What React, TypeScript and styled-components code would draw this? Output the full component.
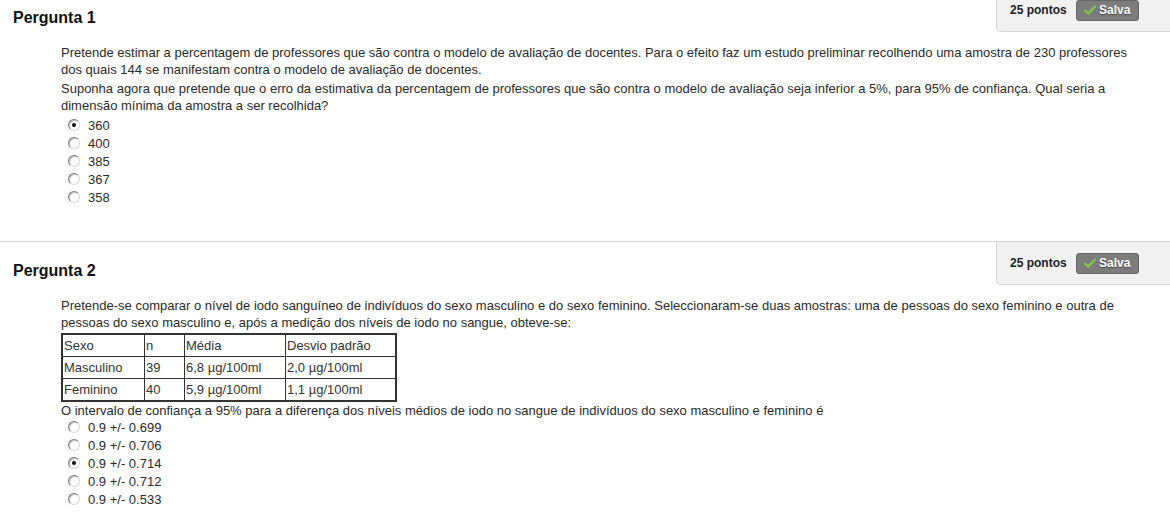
import React from "react";
import styled, { createGlobalStyle } from "styled-components";

const Global = createGlobalStyle`
  html, body { margin: 0; padding: 0; background: #fff; }
  body { font-family: Arial, "Liberation Sans", sans-serif; color: #222; }
`;

const Page = styled.div`
  margin-top: -12px;
  width: 1170px;
  overflow: hidden;
`;

const Section = styled.section<{ $height?: number }>`
  border-top: 1px solid #d2d2d2;
  ${(p) => (p.$height ? `height: ${p.$height}px;` : "")}
  box-sizing: border-box;
`;

const Header = styled.div`
  display: flex;
  justify-content: space-between;
  align-items: flex-start;
`;

const Title = styled.h2`
  margin: 20px 0 0 13px;
  font-size: 16px;
  line-height: 18px;
  font-weight: bold;
  color: #111;
`;

const ScoreBox = styled.div`
  width: 174px;
  height: 43px;
  box-sizing: border-box;
  background: #f1f1f1;
  border-left: 1px solid #d6d6d6;
  border-bottom: 1px solid #d6d6d6;
  border-bottom-left-radius: 5px;
  display: flex;
  align-items: center;
  padding-left: 13px;
  gap: 9px;
`;

const Points = styled.span`
  font-size: 12px;
  font-weight: bold;
  color: #222;
`;

const SavedButton = styled.span`
  display: inline-flex;
  align-items: center;
  justify-content: center;
  gap: 3px;
  width: 63px;
  height: 21px;
  box-sizing: border-box;
  background: #7c7c7c;
  border: 1px solid #666;
  border-radius: 3px;
  color: #fff;
  font-size: 12px;
  font-weight: bold;
  text-shadow: 0 1px 1px #444;
`;

const Body = styled.div`
  padding: 12px 30px 0 61px;
  font-size: 13px;
  line-height: 17px;
  color: #2a2a2a;
`;

const Para = styled.p<{ $mb?: number }>`
  margin: 0 0 ${(p) => p.$mb ?? 2}px 0;
`;

const Options = styled.ul<{ $mt?: number }>`
  list-style: none;
  margin: ${(p) => p.$mt ?? 0}px 0 0 0;
  padding: 0 0 0 7px;
`;

const Option = styled.li`
  display: flex;
  align-items: center;
  height: 18px;
  gap: 8px;
`;

const Radio = styled.span<{ $checked?: boolean }>`
  position: relative;
  width: 12px;
  height: 12px;
  box-sizing: border-box;
  border-radius: 50%;
  border: 1px solid #7a7a7a;
  border-right-color: #d8d8d8;
  border-bottom-color: #d8d8d8;
  background: #fff;
  box-shadow: inset 1px 1px 0 #bdbdbd;
  &::after {
    content: "";
    display: ${(p) => (p.$checked ? "block" : "none")};
    position: absolute;
    left: 3px;
    top: 3px;
    width: 4px;
    height: 4px;
    border-radius: 50%;
    background: #111;
  }
`;

const Table = styled.table`
  border-collapse: separate;
  border-spacing: 0;
  border: 1px solid #333;
  border-right-width: 2px;
  border-bottom-width: 2px;
  margin: 2px 0 0 0;
  font-size: 13px;
  color: #333;
`;

const Cell = styled.td<{ $w: number }>`
  width: ${(p) => p.$w}px;
  height: 22px;
  box-sizing: border-box;
  border: 1px solid #333;
  border-right-width: 0;
  border-bottom-width: 0;
  padding: 0 1px;
  line-height: 15px;
`;

const Check = () => (
  <svg width="12" height="10" viewBox="0 0 12 10">
    <path d="M1 5.5 L4.2 8.5 L11 1.5" fill="none" stroke="#7ed03a" strokeWidth="2.2" strokeLinecap="round" strokeLinejoin="round" />
  </svg>
);

const Score = () => (
  <ScoreBox>
    <Points>25 pontos</Points>
    <SavedButton>
      <Check />
      Salva
    </SavedButton>
  </ScoreBox>
);

const q1Options = ["360", "400", "385", "367", "358"];
const q2Options = ["0.9 +/- 0.699", "0.9 +/- 0.706", "0.9 +/- 0.714", "0.9 +/- 0.712", "0.9 +/- 0.533"];

const rows = [
  ["Sexo", "n", "Média", "Desvio padrão"],
  ["Masculino", "39", "6,8 µg/100ml", "2,0 µg/100ml"],
  ["Feminino", "40", "5,9 µg/100ml", "1,1 µg/100ml"],
];
const widths = [82, 40, 101, 110];

export default function App() {
  return (
    <Page>
      <Global />
      <Section $height={253}>
        <Header>
          <Title>Pergunta 1</Title>
          <Score />
        </Header>
        <Body>
          <Para>
            Pretende estimar a percentagem de professores que são contra o modelo de avaliação de docentes. Para o efeito faz um estudo preliminar recolhendo uma amostra de 230 professores dos quais 144 se manifestam contra o modelo de avaliação de docentes.
          </Para>
          <Para>
            Suponha agora que pretende que o erro da estimativa da percentagem de professores que são contra o modelo de avaliação seja inferior a 5%, para 95% de confiança. Qual seria a dimensão mínima da amostra a ser recolhida?
          </Para>
          <Options $mt={2}>
            {q1Options.map((o, i) => (
              <Option key={o}>
                <Radio $checked={i === 0} />
                {o}
              </Option>
            ))}
          </Options>
        </Body>
      </Section>
      <Section>
        <Header>
          <Title>Pergunta 2</Title>
          <Score />
        </Header>
        <Body>
          <Para $mb={0}>
            Pretende-se comparar o nível de iodo sanguíneo de indivíduos do sexo masculino e do sexo feminino. Seleccionaram-se duas amostras: uma de pessoas do sexo feminino e outra de pessoas do sexo masculino e, após a medição dos níveis de iodo no sangue, obteve-se:
          </Para>
          <Table>
            <tbody>
              {rows.map((r, ri) => (
                <tr key={ri}>
                  {r.map((c, ci) => (
                    <Cell key={ci} $w={widths[ci]}>{c}</Cell>
                  ))}
                </tr>
              ))}
            </tbody>
          </Table>
          <Para $mb={0}>
            O intervalo de confiança a 95% para a diferença dos níveis médios de iodo no sangue de indivíduos do sexo masculino e feminino é
          </Para>
          <Options $mt={-1}>
            {q2Options.map((o, i) => (
              <Option key={o}>
                <Radio $checked={i === 2} />
                {o}
              </Option>
            ))}
          </Options>
        </Body>
      </Section>
    </Page>
  );
}
